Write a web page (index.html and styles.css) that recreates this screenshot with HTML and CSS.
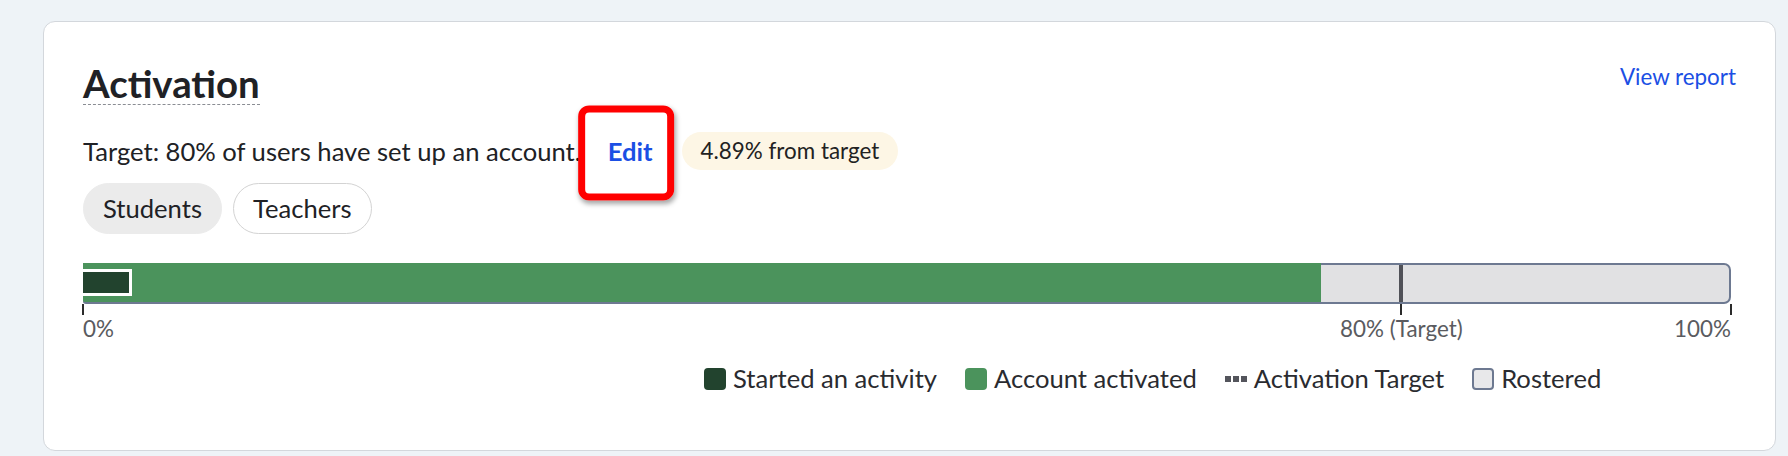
FILE: index.html
```html
<!DOCTYPE html>
<html lang="en">
<head>
    <meta charset="UTF-8">
    <meta name="viewport" content="width=device-width, initial-scale=1.0">
    <title>Activation</title>
    <link rel="stylesheet" href="styles.css">
</head>
<body>
    <div class="card">
        <div class="card-head">
            <h2 class="title">Activation</h2>
            <a class="link" href="#">View report</a>
        </div>

        <div class="target-row">
            <span>Target: 80% of users have set up an account.</span>
            <span class="edit-wrap">
                <button class="edit">Edit</button>
                <span class="highlight"></span>
            </span>
            <span class="badge">4.89% from target</span>
        </div>

        <div class="tabs">
            <button class="tab active">Students</button>
            <button class="tab">Teachers</button>
        </div>

        <div class="chart">
            <div class="bar">
                <div class="seg-activated" style="width: 75.11%">
                    <div class="seg-started"></div>
                </div>
                <div class="seg-rest"></div>
                <div class="target-line" style="left: 80%"></div>
            </div>
            <div class="axis">
                <span class="tick" style="left: 0%"></span>
                <span class="tick" style="left: 80%"></span>
                <span class="tick" style="left: 100%"></span>
                <span class="axis-label start" style="left: 0%">0%</span>
                <span class="axis-label mid" style="left: 80%">80% (Target)</span>
                <span class="axis-label end" style="left: 100%">100%</span>
            </div>
        </div>

        <div class="legend">
            <div class="legend-item"><span class="swatch started"></span>Started an activity</div>
            <div class="legend-item"><span class="swatch activated"></span>Account activated</div>
            <div class="legend-item">
                <svg class="dash" width="22" height="6" viewBox="0 0 22 6">
                    <rect x="0" y="0" width="6" height="6" fill="#54555c"/>
                    <rect x="8" y="0" width="6" height="6" fill="#54555c"/>
                    <rect x="16" y="0" width="6" height="6" fill="#54555c"/>
                </svg>
                Activation Target
            </div>
            <div class="legend-item"><span class="swatch rostered"></span>Rostered</div>
        </div>
    </div>
</body>
</html>
```

FILE: styles.css
```css
/* page */
body {
    margin: 0;
    padding: 21px 12px 0 43px;
    background-color: #eef3f7;
    font-family: Lato, "Noto Sans", sans-serif;
    color: #202125;
}

.card {
    background-color: #fff;
    border: 1px solid #d3d7dc;
    border-radius: 12px;
    padding: 41px 39px 57px 39px;
}

/* header */
.card-head {
    display: flex;
    justify-content: space-between;
    align-items: flex-start;
}
.title {
    margin: 0;
    font-size: 38.4px;
    font-weight: 700;
    line-height: 41px;
    border-bottom: 1px dashed #8a8d93;
}
.link {
    color: #1b4fe4;
    text-decoration: none;
    font-size: 22.4px;
}

/* target line */
.target-row {
    display: flex;
    align-items: center;
    height: 38px;
    margin-top: 27px;
    font-size: 25.6px;
}
.edit-wrap {
    position: relative;
    margin-left: 27px;
}
.edit {
    background: none;
    border: none;
    padding: 0;
    font-family: inherit;
    font-size: 25.6px;
    font-weight: 700;
    color: #1b4fe4;
    cursor: pointer;
}
.highlight {
    position: absolute;
    left: 50%;
    top: 50%;
    width: 96px;
    height: 95px;
    box-sizing: border-box;
    transform: translate(-54%, -48%);
    border: 7px solid #ff0000;
    border-radius: 11px;
    box-shadow: 1px 3px 5px rgba(0, 0, 0, 0.35);
    pointer-events: none;
}
.badge {
    margin-left: 29px;
    padding: 0 19px;
    height: 38px;
    line-height: 38px;
    border-radius: 19px;
    background-color: #fdf6e5;
    font-size: 22.4px;
    color: #222;
}

/* tabs */
.tabs {
    display: flex;
    gap: 11px;
    margin-top: 13px;
}
.tab {
    font-family: inherit;
    font-size: 25.6px;
    line-height: 33px;
    padding: 8px 19px;
    border: 1px solid #d3d3d3;
    border-radius: 26px;
    background-color: #fff;
    color: #202125;
    cursor: pointer;
}
.tab.active {
    background-color: #ebebeb;
    border-color: #ebebeb;
}

/* chart */
.chart {
    margin-top: 29px;
    margin-right: 5px;
}
.bar {
    position: relative;
    display: flex;
    height: 41px;
}
.seg-activated {
    display: flex;
    align-items: center;
    background-color: #4b935c;
    border-bottom: 2px solid #6d7991;
    border-bottom-left-radius: 3px;
}
.seg-started {
    width: 49px;
    height: 27px;
    box-sizing: border-box;
    background-color: #22432e;
    border: 3px solid #fff;
    border-left: none;
}
.seg-rest {
    flex: 1;
    background-color: #e1e1e3;
    border: 2px solid #6d7991;
    border-left: none;
    border-radius: 0 7px 7px 0;
}
.target-line {
    position: absolute;
    top: 2px;
    bottom: 2px;
    width: 4px;
    transform: translateX(-50%);
    background-color: #505158;
}

.axis {
    position: relative;
    height: 38px;
}
.tick {
    position: absolute;
    top: 0;
    width: 2px;
    height: 11px;
    background-color: #2b2b2b;
    transform: translateX(-1px);
}
.axis-label {
    position: absolute;
    top: 12px;
    font-size: 22.4px;
    line-height: 26px;
    color: #5a5b60;
    white-space: nowrap;
}
.axis-label.mid {
    transform: translateX(-50%);
}
.axis-label.end {
    transform: translateX(-100%);
}

/* legend */
.legend {
    display: flex;
    align-items: center;
    gap: 28px;
    margin-top: 22px;
    margin-left: 621px;
    font-size: 25.6px;
    line-height: 29px;
    color: #2a2b30;
}
.legend-item {
    display: flex;
    align-items: center;
    gap: 7px;
}
.swatch {
    width: 22px;
    height: 22px;
    box-sizing: border-box;
    border-radius: 4px;
}
.swatch.started {
    background-color: #22432e;
}
.swatch.activated {
    background-color: #4b935c;
}
.swatch.rostered {
    background-color: #e8e8ea;
    border: 2px solid #6d7991;
}
```
